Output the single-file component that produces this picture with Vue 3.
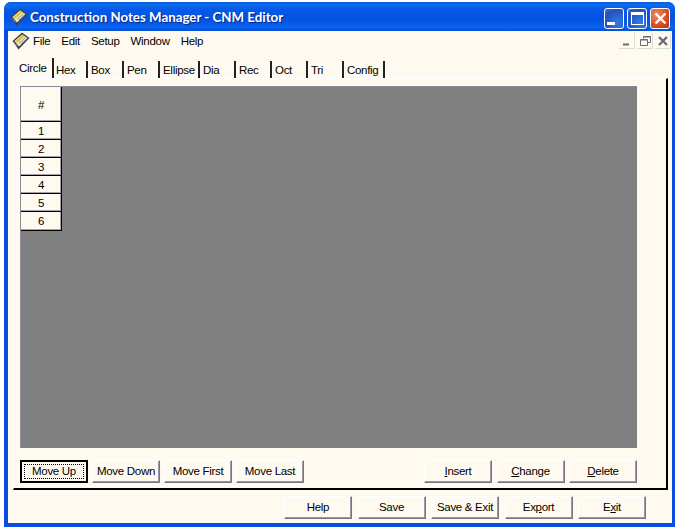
<script setup>
const menus = ['File', 'Edit', 'Setup', 'Window', 'Help']
const tabs = [
  { label: 'Circle', width: 41 }, { label: 'Hex', width: 34 }, { label: 'Box', width: 36 },
  { label: 'Pen', width: 36 }, { label: 'Ellipse', width: 40 }, { label: 'Dia', width: 36 },
  { label: 'Rec', width: 36 }, { label: 'Oct', width: 36 }, { label: 'Tri', width: 36 }, { label: 'Config', width: 41 }
]
const rows = [1, 2, 3, 4, 5, 6]
</script>

<template>
  <div class="window">
    <header class="titlebar">
      <svg class="logo" width="18" height="18" viewBox="0 0 18 18">
        <path d="M0.5 9 L10 0.5 L17.5 6 L6.5 17.5 Z" fill="#39404a" />
        <path d="M2.5 9 L10 2.5 L15.5 6 L7 14.5 Z" fill="#efe9d2" />
        <path d="M4.5 10 L11.5 3.5" stroke="#e2c52e" stroke-width="2.4" />
        <path d="M7 11.5 L13.5 5.5 M9 12 L14.5 7" stroke="#8f949c" stroke-width="1" />
        <path d="M2 10.5 L6 15" stroke="#c9ccd0" stroke-width="1" stroke-dasharray="1 1" />
      </svg>
      <span class="title">Construction Notes Manager - CNM Editor</span>
      <div class="caption-buttons">
        <button class="cap cap-blue"><span class="glyph-min"></span></button>
        <button class="cap cap-blue"><span class="glyph-max"></span></button>
        <button class="cap cap-red">
          <svg width="15" height="15" viewBox="0 0 15 15"><path d="M2.5 2.5 L12.5 12.5 M12.5 2.5 L2.5 12.5" stroke="#fff" stroke-width="2.4" /></svg>
        </button>
      </div>
    </header>

    <div class="client">
      <nav class="menubar">
        <svg class="logo menu-logo" width="18" height="18" viewBox="0 0 18 18">
          <path d="M0.5 9 L10 0.5 L17.5 6 L6.5 17.5 Z" fill="#39404a" />
          <path d="M2.5 9 L10 2.5 L15.5 6 L7 14.5 Z" fill="#efe9d2" />
          <path d="M4.5 10 L11.5 3.5" stroke="#e2c52e" stroke-width="2.4" />
          <path d="M7 11.5 L13.5 5.5 M9 12 L14.5 7" stroke="#8f949c" stroke-width="1" />
          <path d="M2 10.5 L6 15" stroke="#c9ccd0" stroke-width="1" stroke-dasharray="1 1" />
        </svg>
        <span v-for="m in menus" :key="m" class="menu-item">{{ m }}</span>
        <div class="mdi-buttons">
          <span class="mdi"><svg width="16" height="16" viewBox="0 0 16 16"><path d="M4 11.5 H10" stroke="#666d78" stroke-width="2" /></svg></span>
          <span class="mdi"><svg width="16" height="16" viewBox="0 0 16 16"><path d="M6.5 5.5 V3.5 H13.5 V9.5 H11 M3.5 6.5 H10.5 V12.5 H3.5 Z M6.5 4 H13.5 M3.5 7 H10.5" fill="none" stroke="#666d78" /></svg></span>
          <span class="mdi"><svg width="16" height="16" viewBox="0 0 16 16"><path d="M4 4 L12 12 M12 4 L4 12" stroke="#666d78" stroke-width="2.4" /></svg></span>
        </div>
      </nav>

      <div class="tabstrip">
        <div v-for="(t, i) in tabs" :key="t.label" class="tab" :class="{ active: i === 0 }" :style="{ width: t.width + 'px' }">{{ t.label }}</div>
      </div>

      <section class="panel">
        <div class="grid">
          <div class="grid-col">
            <div class="cell head">#</div>
            <div v-for="r in rows" :key="r" class="cell">{{ r }}</div>
          </div>
        </div>
        <div class="panel-actions">
          <div class="group">
            <button class="btn default"><span class="focus">Move Up</span></button>
            <button class="btn">Move Down</button>
            <button class="btn">Move First</button>
            <button class="btn">Move Last</button>
          </div>
          <div class="group group-right">
            <button class="btn"><u>I</u>nsert</button>
            <button class="btn"><u>C</u>hange</button>
            <button class="btn"><u>D</u>elete</button>
          </div>
        </div>
      </section>

      <footer class="footer">
        <button class="btn">Help</button>
        <button class="btn">Save</button>
        <button class="btn">Save &amp; Exit</button>
        <button class="btn">Ex<u>p</u>ort</button>
        <button class="btn">E<u>x</u>it</button>
      </footer>
    </div>
  </div>
</template>

<style>
html, body { margin: 0; background: #fff; }
</style>

<style scoped>
.window {
  width: 671px;
  height: 525px;
  margin: 2px 0 0 4px;
  box-sizing: border-box;
  display: flex;
  flex-direction: column;
  font-family: "Liberation Sans", Arial, sans-serif;
  font-size: 11.5px;
  letter-spacing: -0.3px;
  color: #000;
  background: #0a4be0;
  border-radius: 7px 7px 0 0;
  overflow: hidden;
}
.titlebar {
  height: 29px;
  flex: none;
  display: flex;
  align-items: center;
  padding: 0 5px 0 6px;
  background: linear-gradient(#0a5ad8 0, #0b6cf0 3px, #0658e6 8px, #0453e2 18px, #0a63ee 25px, #0450d8 29px);
}
.logo { flex: none; }
.title {
  margin-left: 2px;
  color: #fff;
  font: bold 13.3px Lato, sans-serif;
  letter-spacing: 0;
  text-shadow: 1px 1px 1px #03288c;
  white-space: nowrap;
}
.caption-buttons { margin-left: auto; margin-top: 4px; display: flex; gap: 3px; }
.cap {
  width: 20px;
  height: 21px;
  padding: 0;
  box-sizing: border-box;
  border: 1px solid #fff;
  border-radius: 3px;
  display: flex;
  align-items: center;
  justify-content: center;
}
.cap-blue { background: radial-gradient(circle at 70% 70%, #2f7de0, #2450c0 70%, #5070c8); }
.cap-red { background: radial-gradient(circle at 30% 30%, #e89070, #d84a20 60%, #c03010); }
.glyph-min { width: 8px; height: 3px; background: #fff; margin: 10px 6px 0 0; }
.glyph-max { width: 13px; height: 13px; box-sizing: border-box; border: 1px solid #fff; border-top-width: 3px; }
.client {
  flex: 1;
  margin: 0 3px 4px 4px;
  background: #fffaf0;
  display: flex;
  flex-direction: column;
  min-height: 0;
}
.menubar {
  height: 20px;
  flex: none;
  display: flex;
  align-items: center;
  padding: 0 1px 0 4px;
}
.menu-logo { margin-right: 3px; }
.menu-item { margin-right: 11px; }
.mdi-buttons { margin-left: auto; display: flex; gap: 2px; }
.mdi { width: 16px; height: 16px; border-right: 1px solid #d8e0d0; border-bottom: 1px solid #d8e0d0; box-sizing: border-box; }
.mdi svg { display: block; }
.tabstrip {
  flex: none;
  height: 20px;
  margin-top: 7px;
  padding-left: 5px;
  display: flex;
  align-items: flex-end;
}
.tab {
  height: 17px;
  box-sizing: border-box;
  border-right: 2px solid #222;
  padding-left: 2px;
  line-height: 19px;
  white-space: nowrap;
}
.tab:nth-child(n+3) { padding-left: 3px; }
.tab.active { height: 20px; padding-left: 6px; line-height: 21px; }
.panel {
  flex: none;
  height: 412px;
  margin-left: 5px;
  width: 655px;
  box-sizing: border-box;
  border-left: 1px solid #fff;
  border-top: 1px solid #fff;
  border-right: 2px solid #000;
  border-bottom: 2px solid #000;
  padding: 7px 29px 0 6px;
}
.grid {
  height: 362px;
  box-sizing: border-box;
  background: #808080;
  border-top: 1px solid #8f8a9a;
  border-left: 1px solid #8f8a9a;
}
.grid-col { width: 40px; border-right: 1px solid #000; border-bottom: 1px solid #000; }
.cell {
  height: 18px;
  box-sizing: border-box;
  background: #fffaf0;
  border-bottom: 1px solid #000;
  box-shadow: inset -1px -1px 0 #a5a1ad;
  text-align: center;
  line-height: 19px;
}
.cell:last-child { border-bottom: 0; }
.cell.head { height: 35px; line-height: 36px; }
.panel-actions { display: flex; justify-content: space-between; margin-top: 12px; }
.group { display: flex; gap: 4px; }
.group-right { gap: 4.5px; }
.btn {
  width: 68px;
  height: 23px;
  padding: 0 0 2px;
  box-sizing: border-box;
  background: #fffaf0;
  border: 1px solid;
  border-color: #fff #7b7488 #7b7488 #fff;
  box-shadow: inset -1px -1px 0 #9c96a8;
  font: 11.5px "Liberation Sans", Arial, sans-serif;
  letter-spacing: -0.3px;
  color: #000;
}
.btn.default { border: 2px solid #000; box-shadow: none; padding: 2px; }
.focus { display: block; height: 15px; line-height: 13px; border: 1px dotted #000; box-sizing: border-box; }
.footer {
  display: flex;
  justify-content: flex-end;
  gap: 5.5px;
  padding: 6px 26px 0 0;
}
</style>
